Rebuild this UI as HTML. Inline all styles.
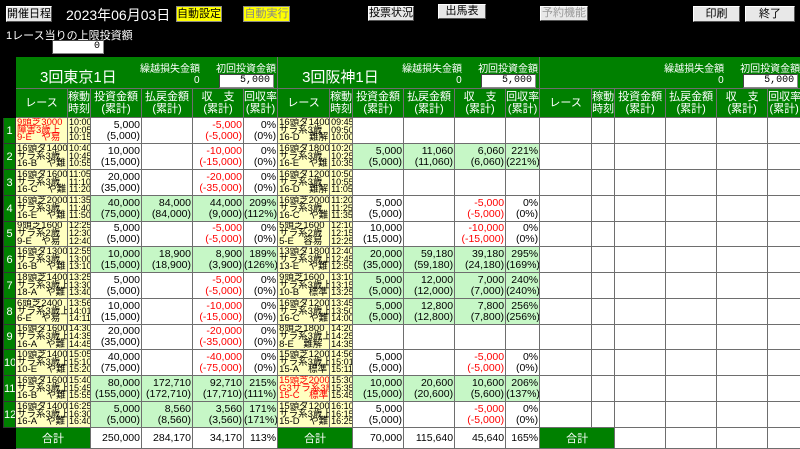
<!DOCTYPE html>
<html><head><meta charset="utf-8"><style>
*{margin:0;padding:0;box-sizing:border-box}
body{width:800px;height:448px;background:#000;overflow:hidden;position:relative;font-family:"Liberation Sans","Noto Sans CJK JP",sans-serif;color:#000}
.btn{position:absolute;background:#e8e8e8;border:1px solid #fff;border-right-color:#555;border-bottom-color:#555;font-size:11px;text-align:center;line-height:14px;height:16px}
.yel{position:absolute;background:#ffff00;border:1px solid #888;font-size:11px;text-align:center;line-height:14px;height:16px}
.lbl{position:absolute;color:#fff;font-size:11px}
.inp{position:absolute;background:#fff;border:1px solid #888;border-top-color:#444;border-left-color:#444;font-size:10px;text-align:right;padding-right:3px;line-height:12px;font-family:"Liberation Mono",monospace;color:#000}
table{position:absolute;left:3px;top:57px;width:797px;border-collapse:collapse;table-layout:fixed;font-size:10.5px}
td{border:1px solid #6e6e6e;overflow:hidden;padding:0;white-space:nowrap}
.hd{background:#008000;color:#fff;position:relative;height:31px;border-color:#008000 #6e6e6e #6e6e6e #6e6e6e}
.ch{background:#008000;color:#fff;text-align:center;line-height:12px;font-size:11px;height:29px}
.ix{background:#008000;color:#fff;text-align:center;font-size:11px;border-color:#333}
.bk{background:#000;border-color:#000}
.n{background:#ffffc0;font-size:9.5px;line-height:7.8px;padding-left:1px}
.t{background:#ffffc0;font-size:9px;line-height:7.8px;padding-left:1px}
.v{background:#fff;text-align:right;line-height:11px;padding-right:1px}
.g .v{background:#c6f7c6}
.r{color:#f00}
.w{background:#fff}
.tot td.v{background:#fff;line-height:16px}
.tt{background:#008000;color:#fff;text-align:center;font-size:11px}
.ttl{position:absolute;left:24px;top:8px;font-size:15px}
.s1{position:absolute;font-size:10px;top:2px}
</style></head><body>
<div class="btn" style="left:6px;top:6px;width:46px">開催日程</div>
<div class="lbl" style="left:66px;top:5px;font-size:14px">2023年06月03日</div>
<div class="yel" style="left:176px;top:6px;width:46px">自動設定</div>
<div class="yel" style="left:243px;top:6px;width:47px;color:#888">自動実行</div>
<div class="btn" style="left:368px;top:6px;width:46px;height:15px;line-height:13px">投票状況</div>
<div class="btn" style="left:438px;top:4px;width:48px;height:15px;line-height:13px">出馬表</div>
<div class="btn" style="left:540px;top:6px;width:48px;height:15px;line-height:13px;color:#999">予約機能</div>
<div class="btn" style="left:693px;top:6px;width:47px">印刷</div>
<div class="btn" style="left:745px;top:6px;width:50px">終了</div>
<div class="lbl" style="left:6px;top:27px">1レース当りの上限投資額</div>
<div class="inp" style="left:52px;top:40px;width:52px;height:14px">0</div>

<table>
<colgroup><col style="width:12px">
<col style="width:52px"><col style="width:23px"><col style="width:51px"><col style="width:51px"><col style="width:51px"><col style="width:34px">
<col style="width:52px"><col style="width:23px"><col style="width:51px"><col style="width:51px"><col style="width:51px"><col style="width:34px">
<col style="width:52px"><col style="width:23px"><col style="width:51px"><col style="width:51px"><col style="width:51px"><col style="width:33px">
</colgroup>
<tr><td class="bk"></td>
<td colspan="6" class="hd"><span class="ttl">3回東京1日</span><span class="s1" style="left:124px">繰越損失金額</span><span class="s1" style="left:178px;top:17px">0</span><span class="s1" style="left:200px">初回投資金額</span><div class="inp" style="left:203px;top:16px;width:55px;height:14px">5,000</div></td>
<td colspan="6" class="hd"><span class="ttl">3回阪神1日</span><span class="s1" style="left:124px">繰越損失金額</span><span class="s1" style="left:178px;top:17px">0</span><span class="s1" style="left:200px">初回投資金額</span><div class="inp" style="left:203px;top:16px;width:55px;height:14px">5,000</div></td>
<td colspan="6" class="hd"><span class="s1" style="left:124px">繰越損失金額</span><span class="s1" style="left:178px;top:17px">0</span><span class="s1" style="left:200px">初回投資金額</span><div class="inp" style="left:203px;top:16px;width:55px;height:14px">5,000</div></td></tr>
<tr><td class="bk"></td>
<td class="ch">レース</td><td class="ch">稼動<br>時刻</td><td class="ch">投資金額<br>(累計)</td><td class="ch">払戻金額<br>(累計)</td><td class="ch">収　支<br>(累計)</td><td class="ch">回収率<br>(累計)</td>
<td class="ch">レース</td><td class="ch">稼動<br>時刻</td><td class="ch">投資金額<br>(累計)</td><td class="ch">払戻金額<br>(累計)</td><td class="ch">収　支<br>(累計)</td><td class="ch">回収率<br>(累計)</td>
<td class="ch">レース</td><td class="ch">稼動<br>時刻</td><td class="ch">投資金額<br>(累計)</td><td class="ch">払戻金額<br>(累計)</td><td class="ch">収　支<br>(累計)</td><td class="ch">回収率<br>(累計)</td></tr>

<tr style="height:26px"><td class="ix">1</td>
<td class="n r">9頭芝3000<br>障害3歳上<br>9-E　や易</td><td class="t">10:00<br>10:05<br>10:15</td><td class="v">5,000<br>(5,000)</td><td class="v"></td><td class="v r">-5,000<br>(-5,000)</td><td class="v">0%<br>(0%)</td>
<td class="n">16頭ダ1400<br>サラ系3歳<br>16-D　難解</td><td class="t">09:45<br>09:50<br>10:00</td><td class="v"></td><td class="v"></td><td class="v"></td><td class="v"></td>
<td class="w"></td><td class="w"></td><td class="w"></td><td class="w"></td><td class="w"></td><td class="w"></td></tr>

<tr style="height:26px"><td class="ix">2</td>
<td class="n">16頭ダ1400<br>サラ系3歳<br>16-B　や難</td><td class="t">10:40<br>10:45<br>10:55</td><td class="v">10,000<br>(15,000)</td><td class="v"></td><td class="v r">-10,000<br>(-15,000)</td><td class="v">0%<br>(0%)</td>
<td class="n">16頭ダ1800<br>サラ系3歳<br>16-E　や難</td><td class="t">10:20<br>10:25<br>10:35</td><td class="v" style="background:#c6f7c6">5,000<br>(5,000)</td><td class="v" style="background:#c6f7c6">11,060<br>(11,060)</td><td class="v" style="background:#c6f7c6">6,060<br>(6,060)</td><td class="v" style="background:#c6f7c6">221%<br>(221%)</td>
<td class="w"></td><td class="w"></td><td class="w"></td><td class="w"></td><td class="w"></td><td class="w"></td></tr>

<tr style="height:26px"><td class="ix">3</td>
<td class="n">16頭ダ1600<br>サラ系3歳<br>16-C　や難</td><td class="t">11:05<br>11:10<br>11:20</td><td class="v">20,000<br>(35,000)</td><td class="v"></td><td class="v r">-20,000<br>(-35,000)</td><td class="v">0%<br>(0%)</td>
<td class="n">16頭ダ1200<br>サラ系3歳<br>16-D　難解</td><td class="t">10:50<br>10:55<br>11:05</td><td class="v"></td><td class="v"></td><td class="v"></td><td class="v"></td>
<td class="w"></td><td class="w"></td><td class="w"></td><td class="w"></td><td class="w"></td><td class="w"></td></tr>

<tr style="height:26px" class="g"><td class="ix">4</td>
<td class="n">16頭芝2000<br>サラ系3歳<br>16-E　や難</td><td class="t">11:35<br>11:40<br>11:50</td><td class="v">40,000<br>(75,000)</td><td class="v">84,000<br>(84,000)</td><td class="v">44,000<br>(9,000)</td><td class="v">209%<br>(112%)</td>
<td class="n">16頭芝2000<br>サラ系3歳<br>16-C　や難</td><td class="t">11:20<br>11:25<br>11:35</td><td class="v" style="background:#fff">5,000<br>(5,000)</td><td class="v" style="background:#fff"></td><td class="v r" style="background:#fff">-5,000<br>(-5,000)</td><td class="v" style="background:#fff">0%<br>(0%)</td>
<td class="w"></td><td class="w"></td><td class="w"></td><td class="w"></td><td class="w"></td><td class="w"></td></tr>

<tr style="height:25px"><td class="ix">5</td>
<td class="n">9頭芝1600<br>サラ系2歳<br>9-E　や易</td><td class="t">12:25<br>12:30<br>12:40</td><td class="v">5,000<br>(5,000)</td><td class="v"></td><td class="v r">-5,000<br>(-5,000)</td><td class="v">0%<br>(0%)</td>
<td class="n">5頭芝1600<br>サラ系2歳<br>5-E　容易</td><td class="t">12:10<br>12:15<br>12:25</td><td class="v">10,000<br>(15,000)</td><td class="v"></td><td class="v r">-10,000<br>(-15,000)</td><td class="v">0%<br>(0%)</td>
<td class="w"></td><td class="w"></td><td class="w"></td><td class="w"></td><td class="w"></td><td class="w"></td></tr>

<tr style="height:26px" class="g"><td class="ix">6</td>
<td class="n">16頭ダ1300<br>サラ系3歳<br>16-B　や難</td><td class="t">12:55<br>13:00<br>13:10</td><td class="v">10,000<br>(15,000)</td><td class="v">18,900<br>(18,900)</td><td class="v">8,900<br>(3,900)</td><td class="v">189%<br>(126%)</td>
<td class="n">13頭ダ1800<br>サラ系3歳上<br>13-E　や難</td><td class="t">12:40<br>12:45<br>12:55</td><td class="v">20,000<br>(35,000)</td><td class="v">59,180<br>(59,180)</td><td class="v">39,180<br>(24,180)</td><td class="v">295%<br>(169%)</td>
<td class="w"></td><td class="w"></td><td class="w"></td><td class="w"></td><td class="w"></td><td class="w"></td></tr>

<tr style="height:26px"><td class="ix">7</td>
<td class="n">18頭芝1400<br>サラ系3歳上<br>18-A　や難</td><td class="t">13:25<br>13:30<br>13:40</td><td class="v">5,000<br>(5,000)</td><td class="v"></td><td class="v r">-5,000<br>(-5,000)</td><td class="v">0%<br>(0%)</td>
<td class="n">9頭芝1600<br>サラ系3歳上<br>10-B　標準</td><td class="t">13:10<br>13:15<br>13:25</td><td class="v" style="background:#c6f7c6">5,000<br>(5,000)</td><td class="v" style="background:#c6f7c6">12,000<br>(12,000)</td><td class="v" style="background:#c6f7c6">7,000<br>(7,000)</td><td class="v" style="background:#c6f7c6">240%<br>(240%)</td>
<td class="w"></td><td class="w"></td><td class="w"></td><td class="w"></td><td class="w"></td><td class="w"></td></tr>

<tr style="height:26px"><td class="ix">8</td>
<td class="n">6頭芝2400<br>サラ系3歳上<br>6-E　や易</td><td class="t">13:56<br>14:01<br>14:11</td><td class="v">10,000<br>(15,000)</td><td class="v"></td><td class="v r">-10,000<br>(-15,000)</td><td class="v">0%<br>(0%)</td>
<td class="n">16頭ダ1200<br>サラ系3歳上<br>16-C　や難</td><td class="t">13:45<br>13:50<br>14:00</td><td class="v" style="background:#c6f7c6">5,000<br>(5,000)</td><td class="v" style="background:#c6f7c6">12,800<br>(12,800)</td><td class="v" style="background:#c6f7c6">7,800<br>(7,800)</td><td class="v" style="background:#c6f7c6">256%<br>(256%)</td>
<td class="w"></td><td class="w"></td><td class="w"></td><td class="w"></td><td class="w"></td><td class="w"></td></tr>

<tr style="height:25px"><td class="ix">9</td>
<td class="n">16頭ダ1600<br>サラ系3歳上<br>16-A　や難</td><td class="t">14:30<br>14:35<br>14:45</td><td class="v">20,000<br>(35,000)</td><td class="v"></td><td class="v r">-20,000<br>(-35,000)</td><td class="v">0%<br>(0%)</td>
<td class="n">8頭芝1800<br>サラ系3歳上<br>8-E　難解</td><td class="t">14:20<br>14:25<br>14:35</td><td class="v"></td><td class="v"></td><td class="v"></td><td class="v"></td>
<td class="w"></td><td class="w"></td><td class="w"></td><td class="w"></td><td class="w"></td><td class="w"></td></tr>

<tr style="height:26px"><td class="ix">10</td>
<td class="n">10頭芝1400<br>サラ系3歳上<br>10-E　や難</td><td class="t">15:05<br>15:10<br>15:20</td><td class="v">40,000<br>(75,000)</td><td class="v"></td><td class="v r">-40,000<br>(-75,000)</td><td class="v">0%<br>(0%)</td>
<td class="n">15頭芝1200<br>サラ系3歳上<br>15-A　標準</td><td class="t">14:56<br>15:01<br>15:11</td><td class="v">5,000<br>(5,000)</td><td class="v"></td><td class="v r">-5,000<br>(-5,000)</td><td class="v">0%<br>(0%)</td>
<td class="w"></td><td class="w"></td><td class="w"></td><td class="w"></td><td class="w"></td><td class="w"></td></tr>

<tr style="height:26px" class="g"><td class="ix">11</td>
<td class="n">16頭ダ1600<br>サラ系3歳上<br>16-B　や難</td><td class="t">15:40<br>15:45<br>15:55</td><td class="v">80,000<br>(155,000)</td><td class="v">172,710<br>(172,710)</td><td class="v">92,710<br>(17,710)</td><td class="v">215%<br>(111%)</td>
<td class="n r">15頭芝2000<br>G3サラ系3歳<br>15-C　標準</td><td class="t">15:30<br>15:35<br>15:45</td><td class="v">10,000<br>(15,000)</td><td class="v">20,600<br>(20,600)</td><td class="v">10,600<br>(5,600)</td><td class="v">206%<br>(137%)</td>
<td class="w"></td><td class="w"></td><td class="w"></td><td class="w"></td><td class="w"></td><td class="w"></td></tr>

<tr style="height:26px" class="g"><td class="ix">12</td>
<td class="n">16頭ダ1400<br>サラ系3歳上<br>16-A　や難</td><td class="t">16:25<br>16:30<br>16:40</td><td class="v">5,000<br>(5,000)</td><td class="v">8,560<br>(8,560)</td><td class="v">3,560<br>(3,560)</td><td class="v">171%<br>(171%)</td>
<td class="n">15頭ダ1200<br>サラ系3歳上<br>15-D　や難</td><td class="t">16:10<br>16:15<br>16:25</td><td class="v" style="background:#fff">5,000<br>(5,000)</td><td class="v" style="background:#fff"></td><td class="v r" style="background:#fff">-5,000<br>(-5,000)</td><td class="v" style="background:#fff">0%<br>(0%)</td>
<td class="w"></td><td class="w"></td><td class="w"></td><td class="w"></td><td class="w"></td><td class="w"></td></tr>

<tr style="height:21px" class="tot"><td class="bk"></td>
<td colspan="2" class="tt">合計</td><td class="v">250,000</td><td class="v">284,170</td><td class="v">34,170</td><td class="v">113%</td>
<td colspan="2" class="tt">合計</td><td class="v">70,000</td><td class="v">115,640</td><td class="v">45,640</td><td class="v">165%</td>
<td colspan="2" class="tt">合計</td><td class="v"></td><td class="v"></td><td class="v"></td><td class="v"></td></tr>
</table>
</body></html>
